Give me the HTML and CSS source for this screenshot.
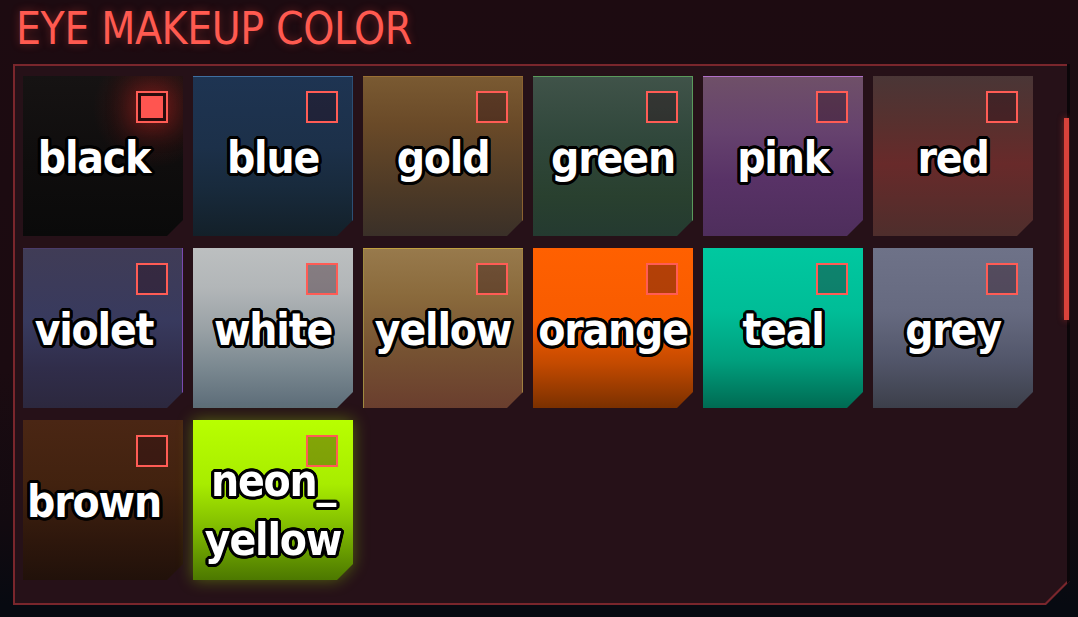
FILE: index.html
```html
<!DOCTYPE html>
<html lang="en">
<head>
<meta charset="utf-8">
<title>Eye Makeup Color</title>
<link rel="stylesheet" href="styles.css">
</head>
<body>
<div class="screen">
  <h1 class="title">EYE MAKEUP COLOR</h1>
  <div class="panel">
    <div class="panel-inner">
      <div class="grid">
        <div class="cell"><div class="tile tile--black"><span class="check check--on"></span><span class="label">black</span></div></div>
        <div class="cell"><div class="tile tile--blue"><span class="check"></span><span class="label">blue</span></div></div>
        <div class="cell"><div class="tile tile--gold"><span class="check"></span><span class="label">gold</span></div></div>
        <div class="cell"><div class="tile tile--green"><span class="check"></span><span class="label">green</span></div></div>
        <div class="cell"><div class="tile tile--pink"><span class="check"></span><span class="label">pink</span></div></div>
        <div class="cell"><div class="tile tile--red"><span class="check"></span><span class="label">red</span></div></div>
        <div class="cell"><div class="tile tile--violet"><span class="check"></span><span class="label">violet</span></div></div>
        <div class="cell"><div class="tile tile--white"><span class="check"></span><span class="label">white</span></div></div>
        <div class="cell"><div class="tile tile--yellow"><span class="check"></span><span class="label">yellow</span></div></div>
        <div class="cell"><div class="tile tile--orange"><span class="check"></span><span class="label">orange</span></div></div>
        <div class="cell"><div class="tile tile--teal"><span class="check"></span><span class="label">teal</span></div></div>
        <div class="cell"><div class="tile tile--grey"><span class="check"></span><span class="label">grey</span></div></div>
        <div class="cell"><div class="tile tile--brown"><span class="check"></span><span class="label">brown</span></div></div>
        <div class="cell cell--glow"><div class="tile tile--neon"><span class="check"></span><span class="label label--two">neon_<br>yellow</span></div></div>
      </div>
    </div>
    <div class="scroll-track"></div>
    <div class="scroll-thumb"></div>
  </div>
</div>
</body>
</html>
```

FILE: styles.css
```css
* { box-sizing: border-box; }

html, body {
  margin: 0;
  padding: 0;
}

body {
  width: 1078px;
  height: 617px;
  overflow: hidden;
  background: linear-gradient(180deg, #1d0b11 0%, #1b0b11 60%, #120a10 85%, #070a11 98%);
  font-family: "DejaVu Sans Condensed", "DejaVu Sans", sans-serif;
}

.screen {
  width: 1078px;
  height: 617px;
  display: flex;
  flex-direction: column;
}

.title {
  margin: 0 0 13px 16px;
  padding-top: 7px;
  font-size: 44px;
  line-height: 44px;
  font-weight: normal;
  font-stretch: condensed;
  color: #ff5a50;
  letter-spacing: -0.4px;
  text-shadow: 0 0 8px rgba(255, 70, 60, 0.35);
}

.panel {
  position: relative;
  margin-left: 13px;
  width: 1057px;
  height: 541px;
  padding: 2px;
  background: #7a262c;
  clip-path: polygon(0 0, 100% 0, 100% calc(100% - 24px), calc(100% - 24px) 100%, 0 100%);
}

.panel-inner {
  width: 100%;
  height: 100%;
  background: #261118;
  clip-path: polygon(0 0, 100% 0, 100% calc(100% - 23px), calc(100% - 23px) 100%, 0 100%);
  padding: 10px 0 0 8px;
}

.grid {
  display: grid;
  grid-template-columns: repeat(6, 160px);
  grid-auto-rows: 160px;
  column-gap: 10px;
  row-gap: 12px;
}

.cell--glow {
  filter: drop-shadow(0 0 8px rgba(170, 255, 0, 0.35));
}

.tile {
  position: relative;
  width: 160px;
  height: 160px;
  display: flex;
  align-items: center;
  justify-content: center;
  clip-path: polygon(0 0, 100% 0, 100% calc(100% - 16px), calc(100% - 16px) 100%, 0 100%);
}

.label {
  display: block;
  margin-top: 2px;
  color: #fff;
  font-family: "DejaVu Sans Condensed", "DejaVu Sans", sans-serif;
  font-stretch: condensed;
  font-weight: bold;
  font-size: 44px;
  line-height: 59px;
  letter-spacing: -1.2px;
  text-align: center;
  text-shadow:
    3px 0 0 #000, -3px 0 0 #000, 0 3px 0 #000, 0 -3px 0 #000,
    2px 2px 0 #000, -2px 2px 0 #000, 2px -2px 0 #000, -2px -2px 0 #000,
    3px 1px 0 #000, -3px 1px 0 #000, 3px -1px 0 #000, -3px -1px 0 #000,
    1px 3px 0 #000, -1px 3px 0 #000, 1px -3px 0 #000, -1px -3px 0 #000;
}

.label--two {
  margin-top: 20px;
}

.cell:nth-child(6n+1) .label {
  transform: translateX(-9px);
}

.check {
  position: absolute;
  top: 15px;
  right: 15px;
  width: 32px;
  height: 32px;
  border: 2px solid #ff5c55;
  background: rgba(40, 10, 20, 0.35);
}

.check--on {
  background: #ff5550;
  box-shadow: inset 0 0 0 3px #2a0b0c, 0 0 22px 6px rgba(200, 40, 35, 0.35);
}

.tile--black {
  background:
    radial-gradient(circle at 130px 32px, rgba(110, 20, 20, 0.45) 0, rgba(110, 20, 20, 0) 60px),
    linear-gradient(180deg, #161313 0%, #0f0d0d 55%, #0a0a0a 100%);
}

.tile--blue {
  background: linear-gradient(180deg, #1e3452 0%, #1c3049 45%, #182a3c 70%, #132029 100%);
  box-shadow: inset 0 1px 0 #3f6fa0, inset -1px 0 0 #2c4f74;
}

.tile--gold {
  background: linear-gradient(180deg, #7a5a32 0%, #6a4a28 30%, #4e3a26 70%, #3a3028 100%);
  box-shadow: inset 0 1px 0 #9a7034, inset -1px 0 0 #8a6230;
}

.tile--green {
  background: linear-gradient(180deg, #405349 0%, #30473b 40%, #29402f 75%, #243a30 100%);
  box-shadow: inset 0 1px 0 #5a9a5c, inset -1px 0 0 #5a9a5c;
}

.tile--pink {
  background: linear-gradient(180deg, #6f5068 0%, #66426e 35%, #583266 65%, #4e2e5c 100%);
  box-shadow: inset 0 1px 0 #b070c8;
}

.tile--red {
  background: linear-gradient(180deg, #4a3636 0%, #58302e 30%, #682a2a 55%, #4e2e2c 100%);
}

.tile--violet {
  background: linear-gradient(180deg, #403c56 0%, #383a5e 45%, #302d4a 75%, #2c283e 100%);
  box-shadow: inset -1px 0 0 #7a4ab0, inset 0 1px 0 #4a3c6a;
}

.tile--white {
  background: linear-gradient(180deg, #bcbfc0 0%, #b2b6b8 25%, #9aa2a6 50%, #7a8890 75%, #5c6c78 100%);
}

.tile--yellow {
  background: linear-gradient(180deg, #987a4c 0%, #8a6a3c 30%, #765232 65%, #6a3e2e 100%);
  box-shadow: inset 0 1px 0 #c0a040, inset 1px 0 0 #a08a40, inset -1px 0 0 #a08040;
}

.tile--orange {
  background: linear-gradient(180deg, #ff6000 0%, #f85c00 45%, #c44a00 72%, #7a3000 100%);
}

.tile--teal {
  background: linear-gradient(180deg, #00c8a0 0%, #00bd97 40%, #00a07e 70%, #006a52 100%);
}

.tile--grey {
  background: linear-gradient(180deg, #6e7288 0%, #666a80 40%, #52566a 70%, #3c3f4a 100%);
}

.tile--brown {
  background: linear-gradient(180deg, #4a2614 0%, #42220f 40%, #2e170c 75%, #21110a 100%);
}

.tile--neon {
  background: linear-gradient(180deg, #b8ff00 0%, #a8ec00 40%, #84c000 65%, #4c7800 100%);
}

.scroll-track {
  position: absolute;
  top: 0;
  right: 0;
  width: 3px;
  height: 100%;
  background: #0b0609;
}

.scroll-thumb {
  position: absolute;
  top: 54px;
  right: 1px;
  width: 5px;
  height: 202px;
  background: #d8423b;
  box-shadow: 0 0 6px rgba(230, 60, 50, 0.5);
}
```
